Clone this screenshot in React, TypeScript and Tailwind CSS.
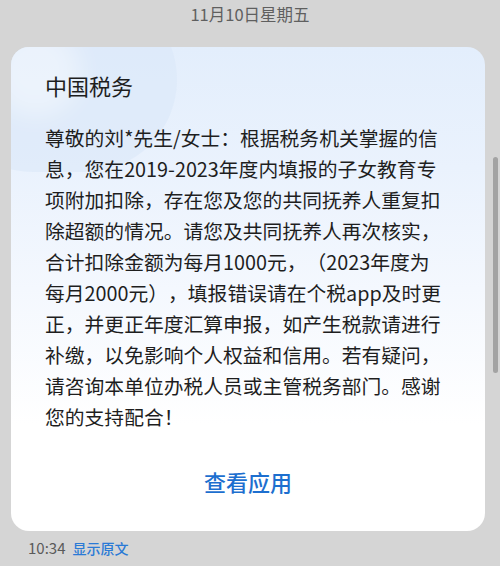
import React from "react";

const lines = [
  "尊敬的刘*先生/女士：根据税务机关掌握的信",
  "息，您在2019-2023年度内填报的子女教育专",
  "项附加扣除，存在您及您的共同抚养人重复扣",
  "除超额的情况。请您及共同抚养人再次核实，",
  "合计扣除金额为每月1000元，（2023年度为",
  "每月2000元），填报错误请在个税app及时更",
  "正，并更正年度汇算申报，如产生税款请进行",
  "补缴，以免影响个人权益和信用。若有疑问，",
  "请咨询本单位办税人员或主管税务部门。感谢",
  "您的支持配合！",
];

export default function App() {
  return (
    <div
      className="relative w-[500px] h-[566px] overflow-hidden bg-[#d5d5d5] flex flex-col [text-spacing-trim:space-all]"
      style={{ fontFamily: '"Noto Sans CJK SC", "Noto Sans", sans-serif' }}
    >
      <div className="h-[28px] flex items-center justify-center text-[16.5px] text-[#5f5f5f]">
        11月10日星期五
      </div>

      <div className="relative mt-[19px] ml-[11px] w-[474px] h-[484px] rounded-[18px] overflow-hidden bg-[linear-gradient(180deg,#e3eefc_0%,#eaf2fd_25%,#f4f8fe_50%,#ffffff_78%)]">
        <div className="absolute left-[-70px] top-[-60px] w-[236px] h-[185px] rounded-full bg-[#dbe7f8] opacity-60" />
        <div className="absolute left-[-20px] top-[-20px] w-[90px] h-[90px] rounded-full bg-white opacity-40 blur-[12px]" />

        <div className="relative flex flex-col pl-[34px]">
          <div className="pt-[23px] h-[53px] text-[22px] leading-[30px] text-[#1e1e1e]">
            中国税务
          </div>
          <div className="mt-[22px] text-[19.8px] leading-[31px] text-[#1e1e1e]">
            {lines.map((l, i) => (
              <div key={i} className="whitespace-nowrap">
                {l}
              </div>
            ))}
          </div>
        </div>

        <div className="relative mt-[34px] flex justify-center text-[22px] leading-[30px] font-medium text-[#1d6fcf]">
          查看应用
        </div>
      </div>

      <div className="mt-[7px] ml-[28px] flex items-center h-[20px] text-[15px]">
        <span className="text-[#5a5a5a]">10:34</span>
        <span className="ml-[7px] text-[14px] font-medium text-[#2a7ad6]">显示原文</span>
      </div>

      <div className="absolute left-[493px] top-[157px] w-[5px] h-[216px] rounded-full bg-[#a3a3a3]" />
    </div>
  );
}
